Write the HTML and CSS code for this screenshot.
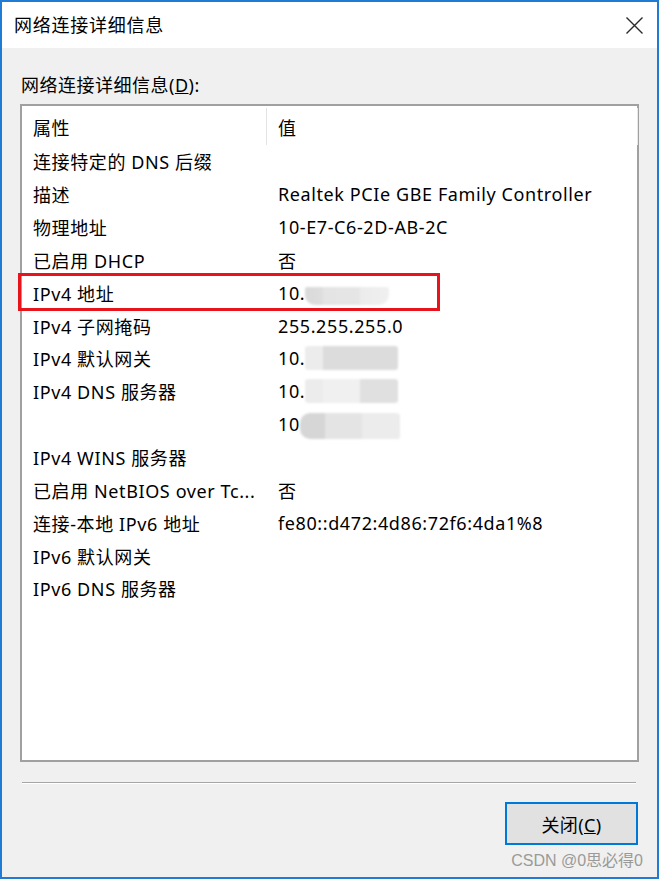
FILE: index.html
```html
<!DOCTYPE html>
<html lang="zh-CN">
<head>
<meta charset="utf-8">
<title>网络连接详细信息</title>
<link rel="stylesheet" href="styles.css">
</head>
<body>
<div class="window">
  <div class="titlebar">
    <span class="title">网络连接详细信息</span>
    <svg class="close" width="17" height="17" viewBox="0 0 17 17"><path d="M0.5 0.5 L16.5 16.5 M16.5 0.5 L0.5 16.5" stroke="#2b2b2b" stroke-width="1.4" fill="none"/></svg>
  </div>
  <div class="body">
    <div class="label">网络连接详细信息(<u>D</u>):</div>
    <div class="listbox">
      <div class="header">
        <div class="hcell c1">属性</div>
        <div class="hcell c2">值</div>
      </div>
      <div class="row"><div class="c1">连接特定的 DNS 后缀</div><div class="c2"></div></div>
      <div class="row"><div class="c1">描述</div><div class="c2">Realtek PCIe GBE Family Controller</div></div>
      <div class="row"><div class="c1">物理地址</div><div class="c2">10-E7-C6-2D-AB-2C</div></div>
      <div class="row"><div class="c1">已启用 DHCP</div><div class="c2">否</div></div>
      <div class="row"><div class="c1">IPv4 地址</div><div class="c2">10.<span class="blob b1"></span></div></div>
      <div class="row"><div class="c1">IPv4 子网掩码</div><div class="c2">255.255.255.0</div></div>
      <div class="row"><div class="c1">IPv4 默认网关</div><div class="c2">10.<span class="blob b2"></span></div></div>
      <div class="row"><div class="c1">IPv4 DNS 服务器</div><div class="c2">10.<span class="blob b3"></span></div></div>
      <div class="row"><div class="c1"></div><div class="c2">10<span class="blob b4"></span></div></div>
      <div class="row"><div class="c1">IPv4 WINS 服务器</div><div class="c2"></div></div>
      <div class="row"><div class="c1">已启用 NetBIOS over Tc...</div><div class="c2">否</div></div>
      <div class="row"><div class="c1">连接-本地 IPv6 地址</div><div class="c2">fe80::d472:4d86:72f6:4da1%8</div></div>
      <div class="row"><div class="c1">IPv6 默认网关</div><div class="c2"></div></div>
      <div class="row"><div class="c1">IPv6 DNS 服务器</div><div class="c2"></div></div>
      <div class="highlight"></div>
    </div>
    <div class="separator"></div>
    <div class="actions">
      <button class="btn">关闭(<u>C</u>)</button>
    </div>
    <div class="watermark">CSDN @0思必得0</div>
  </div>
</div>
</body>
</html>
```

FILE: styles.css
```css
* { box-sizing: border-box; }
html, body { margin: 0; padding: 0; }
body {
  width: 659px;
  height: 879px;
  font-family: "Noto Sans", "Noto Sans CJK SC", sans-serif;
  font-size: 18px;
  color: #000;
  overflow: hidden;
}
.window {
  width: 659px;
  height: 879px;
  border: 2px solid #1f7bd3;
  display: flex;
  flex-direction: column;
  background: #f0f0f0;
}
.titlebar {
  height: 46px;
  background: #fff;
  display: flex;
  align-items: center;
  justify-content: space-between;
  padding: 0 14px 2px 12px;
  flex: none;
}
.title { font-size: 18px; color: #000; letter-spacing: 0.75px; }
.close { margin-top: 2px; }
.body {
  flex: 1;
  position: relative;
  padding: 24px 20px 0 18px;
}
.label {
  height: 32px;
  line-height: 26px;
  padding-left: 1px;
  letter-spacing: 0.5px;
}
.listbox {
  position: relative;
  width: 619px;
  height: 658px;
  background: #fff;
  border: 2px solid #a0a0a0;
  margin-top: 0;
  letter-spacing: 0.6px;
}
.header {
  display: flex;
  height: 39px;
  align-items: stretch;
  padding-top: 2px;
}
.hcell {
  display: flex;
  align-items: center;
  height: 37px;
}
.header .c1 { border-right: 1px solid #e3e3e3; }
.header .c2 { border-right: 1px solid #e8e8e8; width: 371px; flex: none; }
.c1 {
  width: 245px;
  flex: none;
  padding-left: 11px;
  white-space: nowrap;
}
.c2 {
  padding-left: 11px;
  white-space: nowrap;
  display: flex;
  align-items: center;
}
.row {
  display: flex;
  height: 32.85px;
  align-items: center;
}
.blob {
  display: inline-block;
  height: 20px;
  filter: blur(1.2px);
  border-radius: 3px;
}
.b1 {
  width: 84px;
  height: 18px;
  margin-top: 6px;
  background: linear-gradient(90deg, #d9d9d9 0, #dedede 22%, #e4e4e4 22%, #e6e6e6 66%, #ececec 66%, #f0f0f0 100%);
  border-radius: 2px 2px 10px 10px;
}
.b2 {
  width: 93px;
  height: 24px;
  background: linear-gradient(90deg, #ececec 0, #ececec 19%, #dcdcdc 19%, #dcdcdc 100%);
}
.b3 {
  width: 93px;
  height: 24px;
  background: linear-gradient(90deg, #ececec 0, #ececec 19%, #f0f0f0 19%, #f0f0f0 59%, #e0e0e0 59%, #e0e0e0 100%);
}
.b4 {
  width: 100px;
  height: 26px;
  margin-top: 4px;
  background: linear-gradient(90deg, #d6d6d6 0, #d6d6d6 25%, #e4e4e4 25%, #e4e4e4 62%, #ececec 62%, #ececec 100%);
  border-radius: 10px 4px 2px 10px;
}
.highlight {
  position: absolute;
  left: -4px;
  top: 167px;
  width: 422px;
  height: 38px;
  border: 3px solid #e8141b;
}
.separator {
  margin-top: 20px;
  width: 614px;
  margin-left: 2px;
  height: 2px;
  background: #a6a6a6;
  border-bottom: 1px solid #fff;
}
.actions {
  display: flex;
  justify-content: flex-end;
  margin-top: 18px;
  padding-right: 0;
}
.btn {
  width: 133px;
  height: 43px;
  border: 2px solid #0078d7;
  background: #e1e1e1;
  font-family: inherit;
  font-size: 18px;
  color: #000;
  padding: 0;
  margin-right: -1px;
  letter-spacing: 0.4px;
}
.watermark {
  position: absolute;
  right: 14px;
  bottom: 6px;
  font-size: 16px;
  color: #9a9a9a;
  font-family: "Liberation Sans", "Noto Sans CJK SC", sans-serif;
}
```
